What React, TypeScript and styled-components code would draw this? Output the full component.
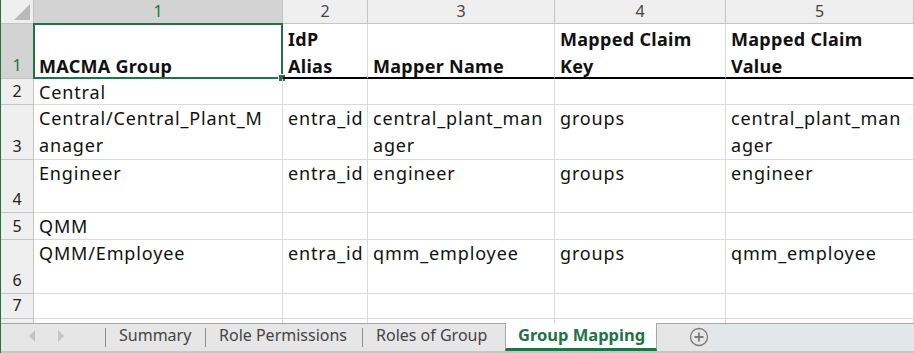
import React from 'react';
import styled, { createGlobalStyle, css } from 'styled-components';

const GlobalStyle = createGlobalStyle`
  html, body {
    margin: 0;
    padding: 0;
    background: #ffffff;
    overflow: hidden;
  }
  body {
    font-family: 'Noto Sans', 'Open Sans', sans-serif;
  }
`;

const GRID_LINE = '#d9d9d9';
const HEAD_LINE = '#c4c4c4';
const EXCEL_GREEN = '#217346';

const columns = ['1', '2', '3', '4', '5'];
const colWidths = [249, 85, 187, 171, 188];

const headers = ['MACMA Group', 'IdP Alias', 'Mapper Name', 'Mapped Claim Key', 'Mapped Claim Value'];

interface RowData {
  height: number;
  cells: string[];
}

const rows: RowData[] = [
  { height: 26, cells: ['Central', '', '', '', ''] },
  {
    height: 55,
    cells: ['Central/Central_Plant_M\nanager', 'entra_id', 'central_plant_man\nager', 'groups', 'central_plant_man\nager'],
  },
  { height: 53, cells: ['Engineer', 'entra_id', 'engineer', 'groups', 'engineer'] },
  { height: 27, cells: ['QMM', '', '', '', ''] },
  { height: 54, cells: ['QMM/Employee', 'entra_id', 'qmm_employee', 'groups', 'qmm_employee'] },
  { height: 25, cells: ['', '', '', '', ''] },
  { height: 26, cells: ['', '', '', '', ''] },
];

const tabs = ['Summary', 'Role Permissions', 'Roles of Group', 'Group Mapping'];
const tabWidths = [100, 157, 143, 152];

const Frame = styled.div`
  width: 914px;
  height: 353px;
  border-left: 1px solid ${EXCEL_GREEN};
  box-sizing: border-box;
  display: flex;
  flex-direction: column;
  overflow: hidden;
`;

const Sheet = styled.div`
  height: 323px;
  overflow: hidden;
  display: grid;
  grid-template-columns: 33px ${colWidths.map((w) => `${w}px`).join(' ')} 1fr;
  align-content: start;
`;

const Corner = styled.div`
  height: 24px;
  background: #efefef;
  border-right: 1px solid ${HEAD_LINE};
  border-bottom: 1px solid ${HEAD_LINE};
  box-sizing: border-box;
  position: relative;

  &::after {
    content: '';
    position: absolute;
    right: 3px;
    bottom: 3px;
    width: 0;
    height: 0;
    border-left: 16px solid transparent;
    border-bottom: 16px solid #b9b9b9;
  }
`;

const ColHead = styled.div<{ $active?: boolean }>`
  height: 24px;
  box-sizing: border-box;
  background: ${(p) => (p.$active ? '#d3d3d3' : '#efefef')};
  color: ${(p) => (p.$active ? EXCEL_GREEN : '#444444')};
  border-right: 1px solid ${HEAD_LINE};
  border-bottom: 1px solid ${(p) => (p.$active ? EXCEL_GREEN : HEAD_LINE)};
  font-size: 16px;
  line-height: 23px;
  text-align: center;
`;

const RowHead = styled.div<{ $active?: boolean; $h: number }>`
  height: ${(p) => p.$h}px;
  box-sizing: border-box;
  background: ${(p) => (p.$active ? '#d3d3d3' : '#efefef')};
  color: ${(p) => (p.$active ? EXCEL_GREEN : '#222222')};
  border-right: 1px solid ${(p) => (p.$active ? EXCEL_GREEN : HEAD_LINE)};
  border-bottom: 1px solid ${HEAD_LINE};
  font-size: 16px;
  line-height: 25px;
  display: flex;
  align-items: flex-end;
  justify-content: center;
`;

const Cell = styled.div<{ $h: number; $header?: boolean }>`
  height: ${(p) => p.$h}px;
  box-sizing: border-box;
  border-right: 1px solid ${GRID_LINE};
  border-bottom: 1px solid ${GRID_LINE};
  padding: 0 1px 0 5px;
  font-size: 18px;
  letter-spacing: 0.85px;
  line-height: 27px;
  color: #111111;
  overflow: hidden;
  white-space: pre;
  position: relative;
  display: flex;
  flex-direction: column;
  justify-content: flex-start;

  ${(p) =>
    p.$header &&
    css`
      font-weight: 700;
      letter-spacing: 0.3px;
      border-bottom: 2px solid #000000;
      justify-content: flex-end;
      white-space: normal;
      overflow: visible;
    `}
`;

const HeaderText = styled.span`
  margin-bottom: -3px;
`;

const Selection = styled.div`
  position: absolute;
  left: -1px;
  top: -1px;
  right: -1px;
  bottom: -2px;
  border: 2px solid ${EXCEL_GREEN};
  pointer-events: none;

  &::after {
    content: '';
    position: absolute;
    right: -5px;
    bottom: -5px;
    width: 6px;
    height: 6px;
    background: ${EXCEL_GREEN};
    border: 1px solid #ffffff;
  }
`;

const TabBar = styled.div`
  height: 30px;
  display: flex;
  background: #e6e6e6;
  border-top: 1px solid #a6a6a6;
  border-bottom: 2px solid #c6c6c6;
  box-sizing: border-box;
`;

const NavArea = styled.div`
  width: 104px;
  display: flex;
  align-items: center;
  padding: 0 0 4px 28px;
  gap: 23px;
  box-sizing: border-box;
`;

const NavArrow = styled.span<{ $dir: 'left' | 'right' }>`
  width: 0;
  height: 0;
  border-top: 6px solid transparent;
  border-bottom: 6px solid transparent;
  ${(p) =>
    p.$dir === 'left'
      ? css`border-right: 6px solid #c4c4c4;`
      : css`border-left: 6px solid #c4c4c4;`}
`;

const Tab = styled.div<{ $active?: boolean; $w: number }>`
  width: ${(p) => p.$w}px;
  box-sizing: border-box;
  font-size: 16px;
  line-height: 22px;
  padding: 0 0 0 14px;
  position: relative;
  color: #444444;

  &::before {
    content: '';
    position: absolute;
    left: 0;
    top: 4px;
    bottom: 4px;
    width: 1px;
    background: #8c8c8c;
  }

  ${(p) =>
    p.$active &&
    css`
      background: #ffffff;
      color: ${EXCEL_GREEN};
      font-size: 16.5px;
      font-weight: 700;
      margin-top: -1px;
      border-left: 1px solid #a6a6a6;
      border-right: 1px solid #a6a6a6;
      border-bottom: 3px solid ${EXCEL_GREEN};
      padding: 1px 0 0 12px;
      &::before {
        display: none;
      }
    `}
`;

const AddArea = styled.div`
  width: 58px;
  display: flex;
  align-items: center;
  justify-content: flex-end;
  padding: 0 6px 2px 0;
  box-sizing: border-box;
`;

const Filler = styled.div`
  flex: 1;
  background: #e2e8ea;
`;

function AddIcon(): React.ReactElement {
  return (
    <svg width="20" height="20" viewBox="0 0 20 20">
      <circle cx="10" cy="10" r="8.5" fill="none" stroke="#7a7a7a" strokeWidth="1.3" />
      <path d="M10 5.5v9M5.5 10h9" stroke="#7a7a7a" strokeWidth="1.8" />
    </svg>
  );
}

export default function App(): React.ReactElement {
  return (
    <>
      <GlobalStyle />
      <Frame>
        <Sheet>
          <Corner />
          {columns.map((c, i) => (
            <ColHead key={c} $active={i === 0}>
              {c}
            </ColHead>
          ))}
          <ColHead />

          <RowHead $h={55} $active>
            1
          </RowHead>
          {headers.map((h, i) => (
            <Cell key={h} $h={55} $header>
              {i === 0 && <Selection />}
              <HeaderText>{h}</HeaderText>
            </Cell>
          ))}
          <Cell $h={55} />

          {rows.map((r, ri) => (
            <React.Fragment key={ri}>
              <RowHead $h={r.height}>{ri + 2}</RowHead>
              {r.cells.map((c, ci) => (
                <Cell key={ci} $h={r.height}>
                  {c}
                </Cell>
              ))}
              <Cell $h={r.height} />
            </React.Fragment>
          ))}
        </Sheet>
        <TabBar>
          <NavArea>
            <NavArrow $dir="left" />
            <NavArrow $dir="right" />
          </NavArea>
          {tabs.map((t, i) => (
            <Tab key={t} $w={tabWidths[i]} $active={i === tabs.length - 1}>
              {t}
            </Tab>
          ))}
          <AddArea>
            <AddIcon />
          </AddArea>
          <Filler />
        </TabBar>
      </Frame>
    </>
  );
}
